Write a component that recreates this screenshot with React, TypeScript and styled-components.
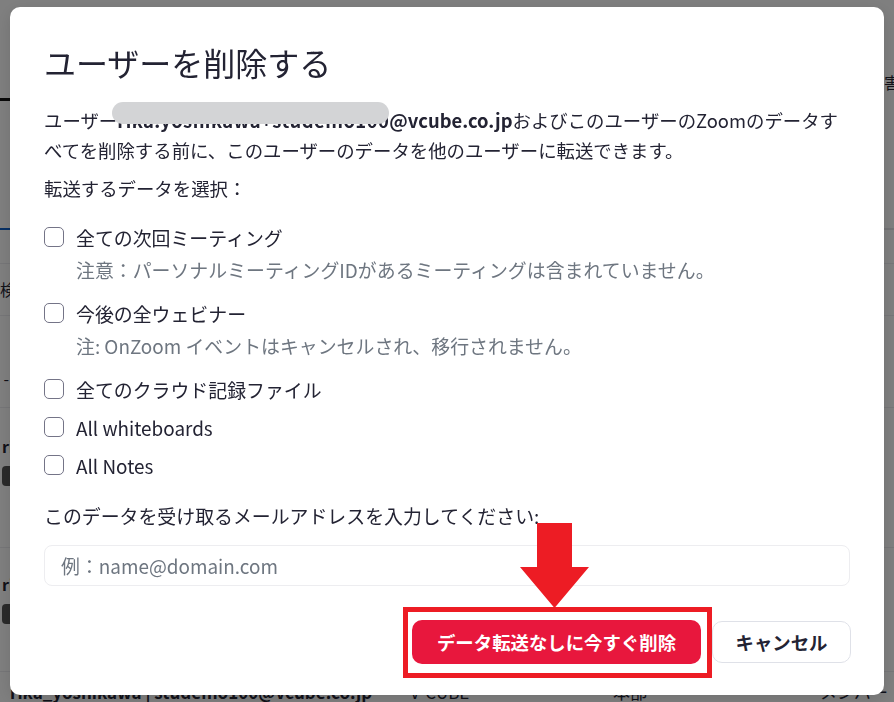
import { createGlobalStyle, styled } from "styled-components";

const Global = createGlobalStyle`
  html, body { margin: 0; padding: 0; }
  body {
    width: 894px;
    height: 702px;
    overflow: hidden;
    background: #fff;
    font-family: "Noto Sans CJK JP", "Noto Sans", sans-serif;
  }
  * { box-sizing: border-box; }
`;

/* ---------- page behind the dialog ---------- */

const Page = styled.div`
  height: 702px;
  display: flex;
  flex-direction: column;
  background: #fff;
  color: #232333;
  font-size: 16px;
`;
const TopBar = styled.div`
  height: 99px;
  display: flex;
  justify-content: flex-end;
  align-items: flex-end;
  padding-bottom: 4px;
`;
const HeaderCell = styled.span`
  width: 10px;
  overflow: hidden;
  white-space: nowrap;
  font-size: 16px;
`;
const TabLine = styled.div`
  height: 3px;
  width: 60px;
  background: #111;
`;
const Spacer = styled.div<{ $h: number }>`
  height: ${(p) => p.$h}px;
`;
const TabBar = styled.div`
  height: 2px;
  background: #e6e6eb;
  display: flex;
`;
const TabActive = styled.div`
  width: 120px;
  background: #0e5fc8;
`;
const Row = styled.div<{ $h: number; $top?: number }>`
  height: ${(p) => p.$h}px;
  border-bottom: 1px solid #ececf0;
  display: flex;
  align-items: ${(p) => (p.$top !== undefined ? "flex-start" : "center")};
  padding-top: ${(p) => p.$top ?? 0}px;
`;
const CellText = styled.span<{ $w?: number; $bold?: boolean }>`
  width: ${(p) => p.$w ?? 100}px;
  flex: none;
  font-weight: ${(p) => (p.$bold ? 700 : 400)};
  white-space: nowrap;
  overflow: hidden;
  text-overflow: ellipsis;
  color: #232333;
`;
const Chip = styled.span`
  display: inline-block;
  width: 40px;
  height: 20px;
  border-radius: 4px;
  background: #555;
`;
const MemberCell = styled.div`
  display: flex;
  flex-direction: column;
  gap: 8px;
  padding-left: 2px;
`;
const BottomRow = styled.div`
  display: flex;
  align-items: flex-start;
  padding: 10px 0 0 10px;
  font-size: 17px;
  line-height: 20px;
`;

/* ---------- dialog ---------- */

const Overlay = styled.div`
  position: fixed;
  inset: 0;
  background: rgba(0, 0, 0, 0.5);
  display: flex;
  justify-content: center;
  align-items: flex-start;
  padding-top: 7px;
`;
const Dialog = styled.div`
  width: 874px;
  height: 688px;
  background: #fff;
  border-radius: 10px;
  padding: 33px 34px 31px;
  display: flex;
  flex-direction: column;
  color: #232333;
  font-size: 18.4px;
  box-shadow: 0 4px 16px rgba(0, 0, 0, 0.12);
`;
const Title = styled.h2`
  margin: 0;
  font-size: 32px;
  line-height: 44px;
  font-weight: 400;
`;
const Text = styled.p<{ $mt: number; $size?: number }>`
  margin: ${(p) => p.$mt}px 0 0;
  font-size: ${(p) => p.$size ?? 18.4}px;
  line-height: 30px;
`;
const Redacted = styled.b`
  position: relative;
  letter-spacing: 0.45px;
  &::after {
    content: "";
    position: absolute;
    left: -5px;
    right: 0;
    top: -5px;
    height: 22px;
    border-radius: 11px;
    background: #d3d4d6;
  }
`;
const List = styled.div`
  margin-top: 19px;
  display: flex;
  flex-direction: column;
  gap: 8px;
  font-size: 18.9px;
`;
const Item = styled.div`
  display: flex;
  flex-direction: column;
`;
const Option = styled.label`
  display: flex;
  align-items: center;
  gap: 12px;
  height: 30px;
`;
const Check = styled.input`
  appearance: none;
  margin: 0;
  width: 20px;
  height: 20px;
  border: 1px solid #747487;
  border-radius: 5px;
  background: #fff;
`;
const Note = styled.div`
  margin: 3px 0 5px 32px;
  line-height: 30px;
  color: #6e7680;
`;
const EmailInput = styled.input`
  margin-top: 14px;
  height: 41px;
  border: 1px solid #ededf0;
  border-radius: 8px;
  padding: 0 16px;
  font: inherit;
  font-size: 18.9px;
  color: #232333;
  outline: none;
  &::placeholder {
    color: #6e7680;
  }
`;
const Footer = styled.div`
  margin-top: auto;
  margin-right: -1px;
  display: flex;
  justify-content: flex-end;
  align-items: center;
  gap: 11px;
`;
const Spot = styled.div`
  position: relative;
  display: flex;
`;
const DangerButton = styled.button`
  width: 289px;
  height: 44px;
  padding: 0;
  border: none;
  border-radius: 10px;
  background: #e8173d;
  color: #fff;
  font: inherit;
  font-weight: 700;
`;
const CancelButton = styled.button`
  width: 139px;
  height: 42px;
  padding: 0;
  border: 1px solid #dfe1e8;
  border-radius: 10px;
  background: #fff;
  color: #232333;
  font: inherit;
  font-weight: 700;
`;
const Frame = styled.div`
  position: absolute;
  left: -9px;
  top: -13px;
  width: 309px;
  height: 71px;
  border: 5px solid #ed1c24;
  pointer-events: none;
`;
const Arrow = styled.svg`
  position: absolute;
  left: 108px;
  top: -97px;
`;

export default function App() {
  return (
    <>
      <Global />
      <Page>
        <TopBar>
          <HeaderCell>害</HeaderCell>
        </TopBar>
        <TabLine />
        <Spacer $h={129} />
        <TabBar>
          <TabActive />
        </TabBar>
        <Row $h={35} />
        <Row $h={52}>
          <CellText $w={60}>検索</CellText>
        </Row>
        <Row $h={93} $top={50}>
          <CellText $w={20}>&nbsp;-</CellText>
        </Row>
        <Row $h={142} $top={26}>
          <MemberCell>
            <CellText $bold>rika</CellText>
            <Chip />
          </MemberCell>
        </Row>
        <Row $h={125} $top={24}>
          <MemberCell>
            <CellText $bold>rika</CellText>
            <Chip />
          </MemberCell>
        </Row>
        <BottomRow>
          <CellText $w={370} $bold>
            rika_yoshikawa | studemo100@vcube.co.jp
          </CellText>
          <CellText $w={30} />
          <CellText $w={203}>V-CUBE</CellText>
          <CellText $w={207}>本部</CellText>
          <CellText $w={74}>メンバー</CellText>
        </BottomRow>
      </Page>

      <Overlay>
        <Dialog role="dialog">
          <Title>ユーザーを削除する</Title>
          <Text $mt={21}>
            ユーザー<Redacted>rika.yoshikawa+studemo100</Redacted>
            <b>@vcube.co.jp</b>およびこのユーザーのZoomのデータす
            <br />
            べてを削除する前に、このユーザーのデータを他のユーザーに転送できます。
          </Text>
          <Text $mt={8}>転送するデータを選択：</Text>
          <List>
            <Item>
              <Option>
                <Check type="checkbox" />
                全ての次回ミーティング
              </Option>
              <Note>注意：パーソナルミーティングIDがあるミーティングは含まれていません。</Note>
            </Item>
            <Item>
              <Option>
                <Check type="checkbox" />
                今後の全ウェビナー
              </Option>
              <Note>注: OnZoom イベントはキャンセルされ、移行されません。</Note>
            </Item>
            <Item>
              <Option>
                <Check type="checkbox" />
                全てのクラウド記録ファイル
              </Option>
            </Item>
            <Item>
              <Option>
                <Check type="checkbox" />
                All whiteboards
              </Option>
            </Item>
            <Item>
              <Option>
                <Check type="checkbox" />
                All Notes
              </Option>
            </Item>
          </List>
          <Text $mt={21} $size={18.9}>
            このデータを受け取るメールアドレスを入力してください:
          </Text>
          <EmailInput placeholder="例：name@domain.com" />
          <Footer>
            <Spot>
              <DangerButton>データ転送なしに今すぐ削除</DangerButton>
              <Frame />
              <Arrow width="70" height="85" viewBox="0 0 70 85">
                <path d="M17 0H52V44H69L34.5 85L0 44H17Z" fill="#ed1c24" />
              </Arrow>
            </Spot>
            <CancelButton>キャンセル</CancelButton>
          </Footer>
        </Dialog>
      </Overlay>
    </>
  );
}
